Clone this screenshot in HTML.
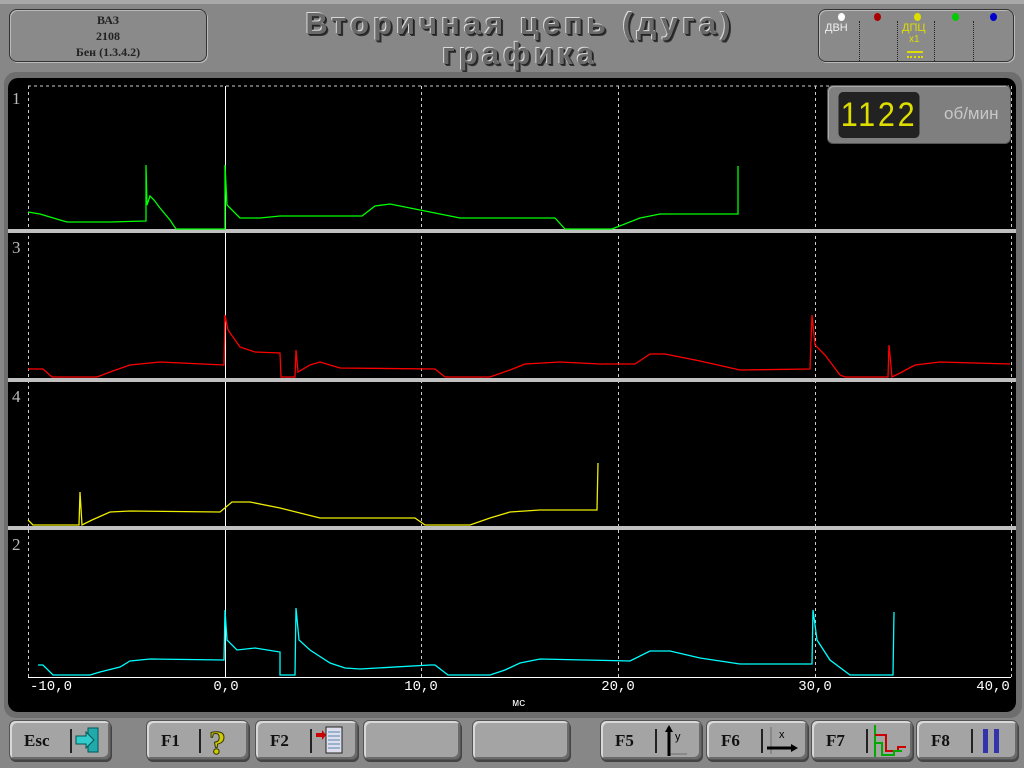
<!DOCTYPE html>
<html><head><meta charset="utf-8"><style>
*{margin:0;padding:0;box-sizing:border-box}
body{width:1024px;height:768px;background:#878787;position:relative;overflow:hidden;font-family:"Liberation Sans",sans-serif}
.topline{position:absolute;left:0;top:0;width:1024px;height:4px;background:#a8a8a8}
.box{position:absolute;border:1px solid #333;border-radius:8px;background:#8a8a8a;box-shadow:inset 1px 1px 0 #bbb,1px 1px 0 #bbb}
.lbl{font-family:"Liberation Serif",serif;font-weight:bold;font-size:12px;color:#222;text-align:center;line-height:16px}
.title{position:absolute;left:200px;width:640px;text-align:center;font-weight:bold;font-size:31px;color:#6a6a6a;letter-spacing:4px;text-shadow:-1px -1px 0 #d8d8d8,1px 1px 0 #222,2px 2px 0 #333}
.btn{position:absolute;top:720px;height:40px;border-radius:6px;background:#a4a4a4;border:1px solid #555;box-shadow:inset 2px 2px 0 #d8d8d8,inset -2px -2px 0 #6a6a6a,1px 2px 0 #444}
.btn b{position:absolute;left:14px;top:10px;font-family:"Liberation Serif",serif;font-size:17px;color:#111}
.sep{position:absolute;top:8px;width:2px;height:24px;background:#222}
</style></head><body>
<div class="topline"></div>
<div class="box" style="left:9px;top:9px;width:198px;height:53px"><div class="lbl" style="padding-top:2px">ВАЗ<br>2108<br>Бен (1.3.4.2)</div></div>
<div class="title" style="top:6px">Вторичная цепь (дуга)</div>
<div class="title" style="top:36px">графика</div>
<div class="box" style="left:818px;top:9px;width:196px;height:53px">
 <div style="position:absolute;left:19px;top:3px;width:7px;height:8px;border-radius:50%;background:#fff"></div>
 <div style="position:absolute;left:55px;top:3px;width:7px;height:8px;border-radius:50%;background:#a00"></div>
 <div style="position:absolute;left:95px;top:3px;width:7px;height:8px;border-radius:50%;background:#dd0"></div>
 <div style="position:absolute;left:133px;top:3px;width:7px;height:8px;border-radius:50%;background:#0c0"></div>
 <div style="position:absolute;left:171px;top:3px;width:7px;height:8px;border-radius:50%;background:#00c"></div>
 <div style="position:absolute;left:6px;top:12px;font-size:11px;color:#eee">ДВН</div>
 <div style="position:absolute;left:83px;top:12px;font-size:11px;color:#dd0">ДПЦ</div>
 <div style="position:absolute;left:90px;top:24px;font-size:10px;color:#dd0">x1</div>
 <div style="position:absolute;left:88px;top:41px;width:16px;height:2px;background:#dd0"></div>
 <div style="position:absolute;left:88px;top:46px;width:16px;border-top:2px dotted #dd0"></div>
 <div style="position:absolute;left:40px;top:11px;height:40px;border-left:1px dotted #222"></div>
 <div style="position:absolute;left:78px;top:11px;height:40px;border-left:1px dotted #222"></div>
 <div style="position:absolute;left:115px;top:11px;height:40px;border-left:1px dotted #222"></div>
 <div style="position:absolute;left:154px;top:11px;height:40px;border-left:1px dotted #222"></div>
</div>
<div style="position:absolute;left:4px;top:72px;width:1018px;height:646px;border-radius:12px;background:#6e6e6e"></div>
<div style="position:absolute;left:8px;top:78px;width:1008px;height:634px;border-radius:10px;background:#000"></div>
<svg style="position:absolute;left:0;top:0" width="1024" height="768" font-family="Liberation Mono, monospace">
<g stroke="#ccc" stroke-dasharray="3,3" stroke-width="1">
<line x1="28" y1="86" x2="1011" y2="86"/>
<line x1="28.5" y1="86" x2="28.5" y2="677"/>
<line x1="421.5" y1="86" x2="421.5" y2="677"/>
<line x1="618.5" y1="86" x2="618.5" y2="677"/>
<line x1="815.5" y1="86" x2="815.5" y2="677"/>
<line x1="1011.5" y1="86" x2="1011.5" y2="677"/>
</g>
<line x1="225.5" y1="86" x2="225.5" y2="677" stroke="#fff"/>
<line x1="28" y1="677.5" x2="1011" y2="677.5" stroke="#fff"/>
<g fill="#c0c0c0"><rect x="8" y="229" width="1008" height="4"/><rect x="8" y="378" width="1008" height="4"/><rect x="8" y="526" width="1008" height="4"/></g>
<g fill="#bbb" font-family="Liberation Serif, serif" font-size="17"><text x="12" y="104">1</text><text x="12" y="253">3</text><text x="12" y="402">4</text><text x="12" y="550">2</text></g>
<g fill="#fff" font-size="14" text-anchor="middle"><text x="51" y="690">-10,0</text><text x="226" y="690">0,0</text><text x="421" y="690">10,0</text><text x="618" y="690">20,0</text><text x="815" y="690">30,0</text><text x="993" y="690">40,0</text><text x="519" y="706" font-size="11">мс</text></g>
<g fill="none" stroke-width="1.3">
<polyline stroke="#0f0" points="28,212 40,214 60,220 67,222 110,222 146,221 146,165 147,205 150,196 154,200 160,208 170,220 176,229 225,229 225,165 227,205 240,218 260,218 280,216 362,216 375,206 390,204 420,210 460,218 555,218 565,229 612,229 640,218 660,214 738,214 738,166"/>
<polyline stroke="#f00" points="28,369 43,369 52,377 97,377 110,372 130,365 160,362 224,365 225,315 228,330 240,347 255,352 280,353 281,377 295,377 296,350 298,372 310,365 320,362 340,368 435,369 445,377 490,377 510,370 525,364 560,362 600,364 635,364 650,354 665,354 700,361 740,370 810,369 812,315 815,345 825,355 840,375 845,377 888,377 889,345 892,377 900,373 915,365 940,362 1010,364"/>
<polyline stroke="#ee0" points="28,520 33,525 79,525 80,492 82,525 92,520 110,512 130,511 220,512 232,502 250,502 280,508 320,518 415,518 425,525 470,525 490,518 510,512 540,510 597,510 598,463"/>
<polyline stroke="#0ff" points="38,665 43,665 53,675 90,675 100,672 120,667 130,661 150,659 224,660 225,610 227,640 237,650 255,648 280,652 280,675 295,675 296,608 299,640 310,650 330,663 345,668 360,669 430,665 435,665 448,675 490,675 505,670 520,663 540,659 630,661 650,651 670,651 700,658 740,664 812,664 813,610 817,640 830,660 850,675 893,675 894,612"/>
</g>
</svg>
<div style="position:absolute;left:827px;top:85px;width:184px;height:59px;border-radius:6px;background:#7f7f7f;border:1px solid #555;box-shadow:inset 1px 1px 0 #aaa"></div>
<div style="position:absolute;left:834px;top:92px;width:90px;height:46px;border-radius:5px;background:#222;color:#dd0;font-family:'Liberation Sans Narrow','Liberation Sans',sans-serif;font-size:34px;line-height:46px;text-align:center;letter-spacing:3px;transform:scaleX(0.9)">1122</div>
<div style="position:absolute;left:944px;top:104px;color:#c8c8c8;font-size:17px">об/мин</div>
<div class="btn" style="left:9px;width:102px"><b>Esc</b><div class="sep" style="left:60px"></div><svg style="position:absolute;left:64px;top:5px" width="30" height="28"><rect x="14" y="2" width="10" height="24" fill="#2aa" stroke="#055"/><polygon points="2,10 12,10 12,6 20,14 12,22 12,18 2,18" fill="#3cc" stroke="#055"/></svg></div>
<div class="btn" style="left:146px;width:103px"><b>F1</b><div class="sep" style="left:52px"></div><svg style="position:absolute;left:60px;top:3px" width="30" height="34"><text x="2" y="30" font-size="34" font-weight="bold" fill="#cc0" stroke="#330" font-family="Liberation Serif">?</text></svg></div>
<div class="btn" style="left:255px;width:103px"><b>F2</b><div class="sep" style="left:54px"></div><svg style="position:absolute;left:60px;top:4px" width="30" height="30"><polygon points="0,8 6,8 6,5 10,10 6,15 6,12 0,12" fill="#c00"/><rect x="10" y="2" width="16" height="26" fill="#dde" stroke="#222"/><g stroke="#58a"><line x1="12" y1="7" x2="24" y2="7"/><line x1="12" y1="11" x2="24" y2="11"/><line x1="12" y1="15" x2="24" y2="15"/><line x1="12" y1="19" x2="24" y2="19"/><line x1="12" y1="23" x2="24" y2="23"/></g></svg></div>
<div class="btn" style="left:363px;width:98px"></div>
<div class="btn" style="left:472px;width:98px"></div>
<div class="btn" style="left:600px;width:102px"><b>F5</b><div class="sep" style="left:54px"></div><svg style="position:absolute;left:60px;top:3px" width="30" height="34"><line x1="8" y1="30" x2="26" y2="30" stroke="#888" stroke-width="2"/><line x1="8" y1="32" x2="8" y2="3" stroke="#000" stroke-width="3"/><polygon points="4,8 8,1 12,8" fill="#000"/><text x="14" y="16" font-size="11" fill="#000">y</text></svg></div>
<div class="btn" style="left:706px;width:102px"><b>F6</b><div class="sep" style="left:54px"></div><svg style="position:absolute;left:60px;top:3px" width="32" height="32"><line x1="4" y1="3" x2="4" y2="30" stroke="#888" stroke-width="2"/><line x1="0" y1="24" x2="26" y2="24" stroke="#000" stroke-width="3"/><polygon points="24,20 31,24 24,28" fill="#000"/><text x="12" y="14" font-size="11" fill="#000">x</text></svg></div>
<div class="btn" style="left:811px;width:102px"><b>F7</b><div class="sep" style="left:54px"></div><svg style="position:absolute;left:60px;top:2px" width="34" height="36"><line x1="3" y1="2" x2="3" y2="34" stroke="#0a0" stroke-width="2"/><polyline points="3,12 14,12 14,28 26,28 26,24 34,24" fill="none" stroke="#c00" stroke-width="2"/><polyline points="3,20 10,20 10,32 22,32 22,28 30,28" fill="none" stroke="#0a0" stroke-width="2"/></svg></div>
<div class="btn" style="left:916px;width:102px"><b>F8</b><div class="sep" style="left:54px"></div><div style="position:absolute;left:66px;top:8px;width:5px;height:24px;background:#33a"></div><div style="position:absolute;left:77px;top:8px;width:5px;height:24px;background:#33a"></div></div>
</body></html>
